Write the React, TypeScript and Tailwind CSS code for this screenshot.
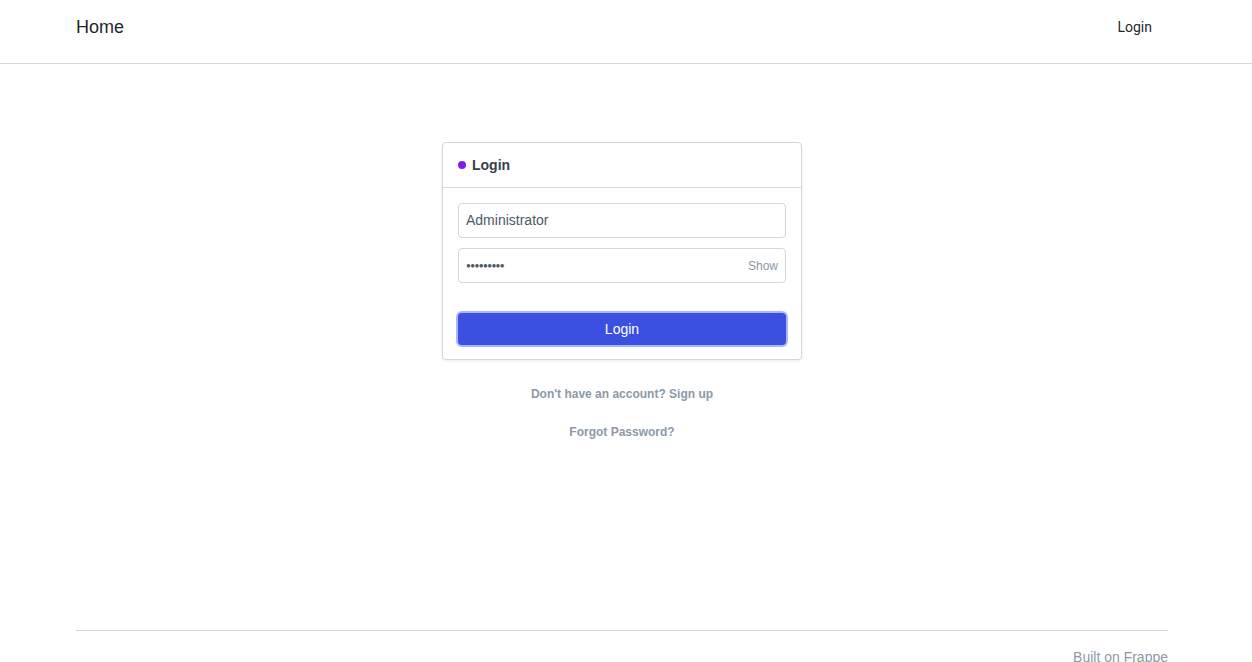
import React from "react";

export default function App() {
  return (
    <div className="min-h-[662px] bg-white flex flex-col" style={{ fontFamily: '"Liberation Sans", Arial, sans-serif' }}>
      <nav className="h-[64px] border-b border-[#d1d8dd] flex items-center pb-[8px]">
        <div className="w-[1244px]">
          <div className="w-[1092px] mx-auto flex items-center justify-between">
            <span className="text-[18px] text-[#1f272e]">Home</span>
            <span className="text-[14px] text-[#1f272e] pr-[16px]" style={{ fontFamily: 'Roboto, "Liberation Sans", sans-serif' }}>Login</span>
          </div>
        </div>
      </nav>
      <main className="flex-1 w-[1244px] flex flex-col items-center pt-[78px]">
        <div className="w-[360px] border border-[#d1d8dd] rounded-[4px] shadow-[0_1px_3px_rgba(0,0,0,0.08)] bg-white">
          <div className="h-[45px] border-b border-[#d1d8dd] flex items-center px-[15px] gap-[6px]">
            <span className="w-[8px] h-[8px] rounded-full bg-[#7c1cf0]"></span>
            <span className="text-[14px] font-bold text-[#36414c]">Login</span>
          </div>
          <div className="px-[15px] pt-[15px] pb-[14px]">
            <div className="h-[35px] border border-[#d1d8dd] rounded-[4px] flex items-center px-[7px] text-[14px] text-[#4c5a67]">Administrator</div>
            <div className="h-[35px] mt-[10px] border border-[#d1d8dd] rounded-[4px] flex items-center justify-between px-[7px] text-[#4c5a67]">
              <span className="text-[8px] tracking-[-0.6px]">●●●●●●●●●</span>
              <span className="text-[12px] text-[#8d99a6]">Show</span>
            </div>
            <div className="mt-[30px] h-[32px] rounded-[4px] bg-[#3b4fe0] ring-2 ring-[#a5b8fb] flex items-center justify-center text-[14px] text-white leading-[14px] pb-[1px]">Login</div>
          </div>
        </div>
        <div className="mt-[25px] text-[12px] font-bold text-[#8d99a6]">Don't have an account? Sign up</div>
        <div className="mt-[20px] text-[12px] font-bold text-[#8d99a6]">Forgot Password?</div>
      </main>
      <div className="w-[1244px]">
        <footer className="w-[1092px] mx-auto border-t border-[#d1d8dd] h-[32px] flex justify-end items-end">
          <span className="text-[14px] text-[#8d99a6] leading-[16px] -mb-[3px]">Built on Frappe</span>
        </footer>
      </div>
    </div>
  );
}
